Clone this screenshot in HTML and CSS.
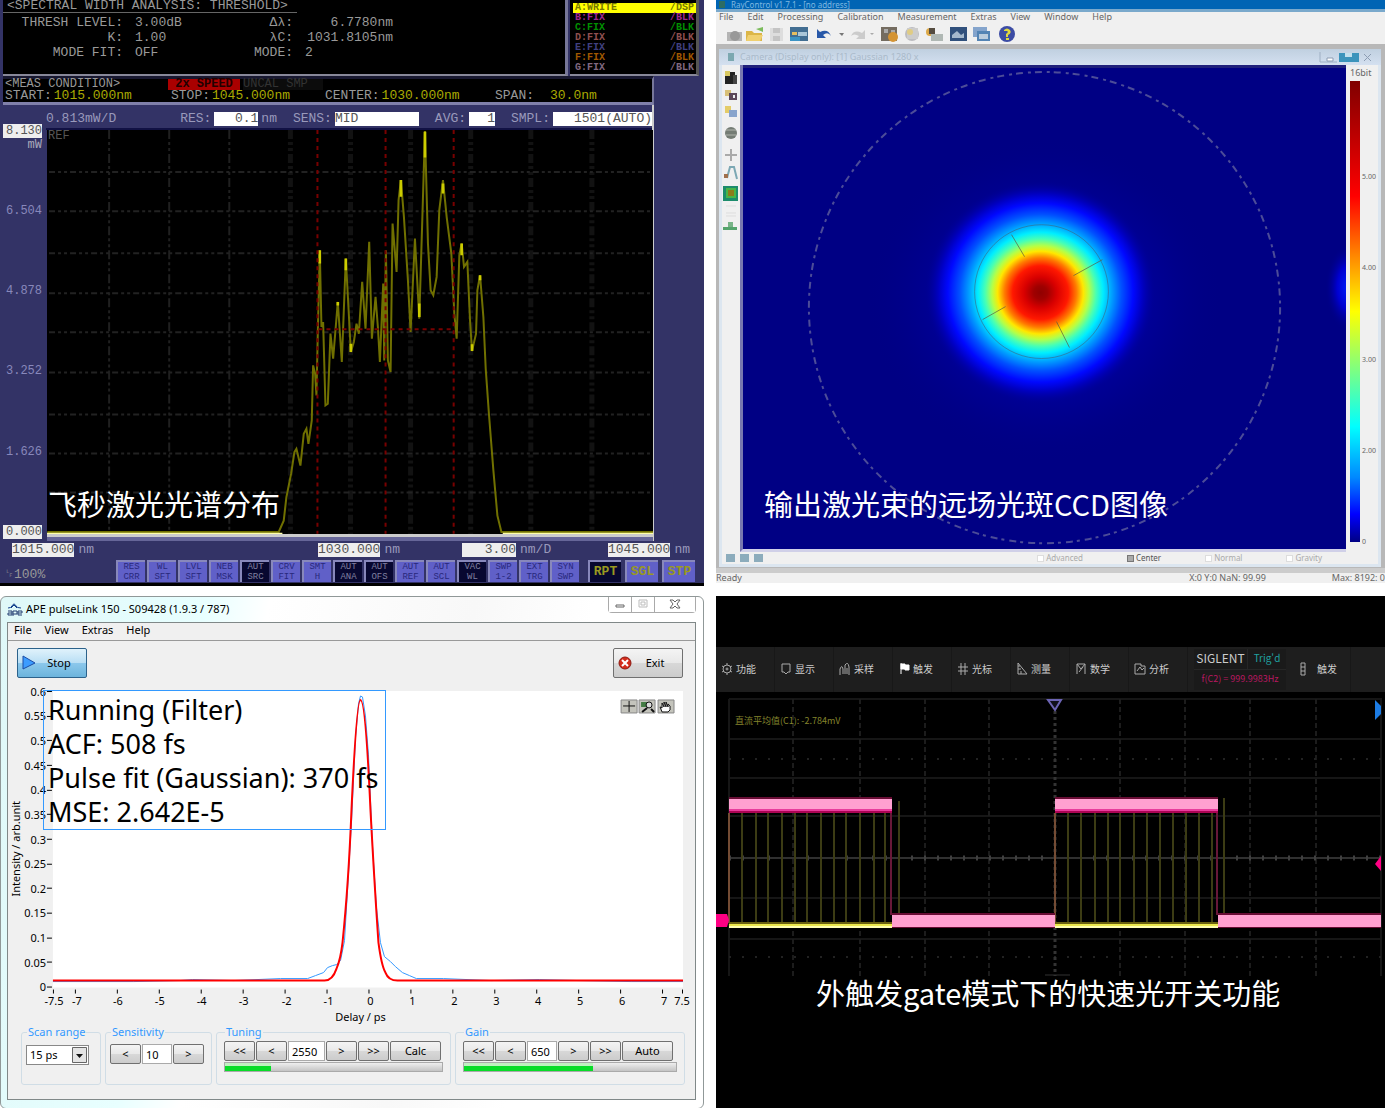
FILE: index.html
```html
<!DOCTYPE html>
<html lang="zh-CN">
<head>
<meta charset="utf-8">
<title>飞秒激光测试结果</title>
<link rel="stylesheet" href="styles.css">
</head>
<body>
<main class="board">

<section class="panel osa">
  <div class="osa-top">
    <div class="osa-analysis">
      <h2>&lt;SPECTRAL WIDTH ANALYSIS: THRESHOLD&gt;</h2>
      <dl class="osa-values">
        <dt>THRESH LEVEL:</dt><dd>3.00dB</dd><dt>Δλ:</dt><dd class="end">6.7780nm</dd>
        <dt>K:</dt><dd>1.00</dd><dt>λC:</dt><dd class="end">1031.8105nm</dd>
        <dt>MODE FIT:</dt><dd>OFF</dd><dt>MODE:</dt><dd>2</dd>
      </dl>
    </div>
    <ul class="traces">
      <li class="tr-a"><span>A:WRITE</span><span>/DSP</span></li>
      <li class="tr-b"><span>B:FIX</span><span>/BLK</span></li>
      <li class="tr-c"><span>C:FIX</span><span>/BLK</span></li>
      <li class="tr-d"><span>D:FIX</span><span>/BLK</span></li>
      <li class="tr-e"><span>E:FIX</span><span>/BLK</span></li>
      <li class="tr-f"><span>F:FIX</span><span>/BLK</span></li>
      <li class="tr-g"><span>G:FIX</span><span>/BLK</span></li>
    </ul>
  </div>
  <div class="osa-cond">
    <div class="cond-head"><span>&lt;MEAS CONDITION&gt;</span><span class="speed">2x SPEED</span><span class="dim">UNCAL SMP</span></div>
    <div class="cond-row">
      <span>START:<b>1015.000nm</b></span><span>STOP:<b>1045.000nm</b></span><span>CENTER:<b>1030.000nm</b></span><span class="span-set">SPAN:<b>30.0nm</b></span>
    </div>
  </div>
  <div class="osa-main">
    <div class="osa-axis">
      <span class="boxed">8.130<i>mW</i></span><span>6.504</span><span>4.878</span><span>3.252</span><span>1.626</span><span class="boxed">0.000</span>
    </div>
    <div class="osa-graph">
      <div class="osa-params">
        <span class="scale">0.813mW/D</span>
        <label>RES:<input class="w-res" value="0.1">nm</label>
        <label>SENS:<input class="w-sens" value="MID"></label>
        <label>AVG:<input class="w-avg" value="1"></label>
        <label>SMPL:<input class="w-smpl" value="1501(AUTO)"></label>
      </div>
      <svg class="osa-plot" viewBox="47 130 605 403" role="img" aria-label="Spectrum">
        <g class="osa-grid-v"><path d="M109 130V533M169 130V533M229 130V533"/><path class="wide" d="M290 130V533M350 130V533M410 130V533M470 130V533M530 130V533M591 130V533"/></g>
        <path class="osa-grid-h" d="M49 172H652M49 211H652M49 253H652M49 293H652M49 332H652M49 372H652M49 414H652M49 453H652M49 492H652"/>
        <text x="48" y="139" class="osa-ref">REF</text>
        <g transform="translate(270 120) scale(.33333)">
          <path class="trace" d="M-668 1234H25L40 1200L48 1130L62 1060L72 995L78 985L90 1035L100 940L108 925L114 970L124 900L128 735L134 760L138 825L142 640L148 390L153 620L158 605L165 855L172 850L180 640L188 715L202 545L214 725L226 415L236 600L241 695L250 665L258 610L265 640L275 485L285 625L296 365L304 655L315 530L322 620L328 725L338 490L341 720L346 390L352 720L360 755L366 310L378 455L384 240L391 180L400 290L412 480L420 635L433 355L446 595L455 300L463 33L472 370L480 510L488 525L498 470L506 270L517 180L528 290L542 400L551 580L558 655L566 405L573 370L580 440L590 425L598 600L604 692L616 640L620 510L628 465L638 590L645 745L655 885L668 1050L680 1185L692 1234H1146"/>
          <path class="tips" d="M463 35V112M391 180V230M573 370V405M148 390V430M226 415V450M241 670V695M604 672V692M628 465V480M517 190V220M446 550V590M202 545V556"/>
        </g>
        <path class="marker-v" d="M317 130V533M385 130V533M453 130V533M318 329H454"/>
        <path class="floor" d="M47 533H282M502 533H652"/>
      </svg>
    </div>
  </div>
  <div class="osa-scale">
    <span><b>1015.000</b>nm</span><span><b>1030.000</b>nm</span><span><b>3.00</b>nm/D</span><span><b>1045.000</b>nm</span>
  </div>
  <div class="osa-keys">
    <span class="pct">␊100%</span>
    <div class="keys">
      <button>RES<br>CRR</button><button>WL<br>SFT</button><button>LVL<br>SFT</button><button>NEB<br>MSK</button><button class="on">AUT<br>SRC</button><button>CRV<br>FIT</button><button>SMT<br>H</button><button class="on">AUT<br>ANA</button><button class="on">AUT<br>OFS</button><button>AUT<br>REF</button><button>AUT<br>SCL</button><button class="on">VAC<br>WL</button><button>SWP<br>1-2</button><button>EXT<br>TRG</button><button>SYN<br>SWP</button>
    </div>
    <div class="runs"><button class="on">RPT</button><button>SGL</button><button>STP</button></div>
  </div>
  <p class="caption">飞秒激光光谱分布</p>
</section>

<section class="panel beam">
  <div class="beam-title"><i></i>RayControl v1.7.1 - [no address]</div>
  <div class="beam-head">
    <nav class="beam-menu"><a href="#">File</a><a href="#">Edit</a><a href="#">Processing</a><a href="#">Calibration</a><a href="#">Measurement</a><a href="#">Extras</a><a href="#">View</a><a href="#">Window</a><a href="#">Help</a></nav>
    <svg class="beam-tools" viewBox="722 25 300 19" aria-hidden="true">
      <path d="M727 32h15v9h-15z" fill="#b4b4b4"/><circle cx="735" cy="36" r="5" fill="#999"/>
      <path d="M746 31h6l2 2h8v8h-16z" fill="#dcb648"/><path d="M748 35h15l-3 6h-14z" fill="#f0d070"/><path d="M756 29l7-2v5z" fill="#7cbc5c"/>
      <path d="M770 28h13v13h-13z" fill="#ddd"/><path d="M773 28h7v5h-7zM773 36h7v5h-7z" fill="#c4c4c4"/>
      <path d="M790 27h18v14h-18z" fill="#426e92"/><path d="M792 32h5v3h-5z" fill="#e6be60"/><path d="M798 32h9v4h-9z" fill="#aac6d8"/><path d="M790 37h10v4h-10z" fill="#3c94c4"/>
      <path d="M817 29v9h9l-3-3q5-4 8 1q-3-8-11-4z" fill="#2858a8"/><path d="M839 33h5l-2 3z" fill="#777"/>
      <path d="M865 30v9h-9l3-3q-5-3-8 0q3-7 11-3z" fill="#ccc"/><path d="M870 33h4l-2 2z" fill="#aaa"/>
      <path d="M881 27h16v14h-16z" fill="#746c60"/><path d="M884 29h4v4h-4zM891 30h4v3h-4z" fill="#aaa"/><circle cx="893" cy="37" r="5" fill="#d49434"/>
      <circle cx="912" cy="34" r="7" fill="#bcbcc0"/><path d="M907 28h11v11h-11z" fill="#ccc"/><circle cx="910" cy="32" r="3" fill="#e0cc84"/>
      <circle cx="930" cy="32" r="4" fill="#dca848"/><path d="M929 28h6v6h-6z" fill="#554c40"/><path d="M931 34h12v7h-12z" fill="#b0b8b4"/>
      <path d="M950 27h17v14h-17z" fill="#30507c"/><path d="M952 35l5-4 4 4 3-2v5h-12z" fill="#a4b8cc"/>
      <path d="M973 27h14v10h-14z" fill="#84a4cc"/><path d="M977 31h13v10h-13z" fill="#5484b4"/><path d="M979 34h9v5h-9z" fill="#bccddd"/>
      <circle cx="1007" cy="34" r="8" fill="#3c4ca4"/><path d="M1004 30q3-3 6 0q2 3-2 5v2h-2v-3q3-2 1-3h-3z" fill="#e0d840"/><path d="M1006 38h3v2h-3z" fill="#e0d840"/>
    </svg>
  </div>
  <div class="beam-client">
    <div class="child-title"><i></i><span>Camera (Display only): [1] Gaussian 1280 x</span>
      <svg viewBox="1318 51 60 13" aria-hidden="true"><path d="M1320 52v10h17" fill="none" stroke="#9fb0c4"/><path d="M1327 58h6v3h-6z" fill="#fff" stroke="#8d9db3"/><path d="M1339 53h20v9h-20z" fill="#3c94bc"/><path d="M1345 53h7v4h-7z" fill="#c2e0ee"/><path d="M1364 54l7 7m0-7l-7 7" stroke="#8d9db3"/></svg>
    </div>
    <div class="child-body">
      <svg class="side-tools" viewBox="722 65 18 172" aria-hidden="true">
        <path d="M727 72h8v12h-10v-8z" fill="#222"/><path d="M725 71h5v5h-5z" fill="#d8c860"/><path d="M733 75h4v9h-4z" fill="#444"/>
        <path d="M725 90h6v6h-6z" fill="#d8c078"/><path d="M729 93h8v7h-8z" fill="#5c4858"/><path d="M733 95h2v3h-2z" fill="#eee"/>
        <path d="M725 106h6v7h-6z" fill="#e4cc68"/><path d="M729 110h8v7h-8z" fill="#88a4cc"/>
        <circle cx="731" cy="133" r="6" fill="#747c74"/><path d="M726 130h10M726 135h10" stroke="#b0b4ac"/>
        <path d="M731 149v12M725 155h12" stroke="#aaa" stroke-width="2"/>
        <path d="M727 178l3-11h4l3 12" fill="none" stroke="#7ca8b4" stroke-width="2"/><path d="M724 174h4v4h-4z" fill="#a0704c"/>
        <path d="M723 186h15v15h-15z" fill="#1c8c6c"/><path d="M726 188h10v10h-10z" fill="#48b448"/><path d="M728 190h6v6h-6z" fill="#8c7c1c"/>
        <path d="M726 206h10M726 213h10M726 216h10" stroke="#ddd"/>
        <path d="M723 227h14v3h-14z" fill="#54a46c"/><path d="M728 222h5v5h-5z" fill="#78b488"/>
      </svg>
      <svg class="heat" viewBox="743 65 604 485" role="img" aria-label="Beam profile">
        <defs>
          <radialGradient id="spot"><stop offset="0" stop-color="#900000"/><stop offset=".06" stop-color="#a00000"/><stop offset=".14" stop-color="#d80000"/><stop offset=".24" stop-color="#ff1800"/><stop offset=".31" stop-color="#ff7a00"/><stop offset=".37" stop-color="#ffe800"/><stop offset=".42" stop-color="#b4ff48"/><stop offset=".48" stop-color="#48ffb4"/><stop offset=".54" stop-color="#00eeff"/><stop offset=".62" stop-color="#009cff"/><stop offset=".7" stop-color="#0050ff"/><stop offset=".8" stop-color="#0008ff"/><stop offset=".88" stop-color="#0000c4"/><stop offset="1" stop-color="#000090" stop-opacity="0"/></radialGradient>
          <radialGradient id="halo"><stop offset="0" stop-color="#0000b4"/><stop offset=".5" stop-color="#0000a0"/><stop offset="1" stop-color="#000084" stop-opacity="0"/></radialGradient>
          <radialGradient id="edge"><stop offset="0" stop-color="#0020ff"/><stop offset=".5" stop-color="#0000d0"/><stop offset="1" stop-color="#000084" stop-opacity="0"/></radialGradient>
        </defs>
        <path d="M743 65h604v485h-604z" fill="#000084"/>
        <path d="M743 65h604v3h-604z" fill="#20207c"/>
        <ellipse cx="1045" cy="300" rx="180" ry="165" fill="url(#halo)"/>
        <ellipse cx="1350" cy="288" rx="24" ry="44" fill="url(#edge)"/>
        <ellipse cx="1041" cy="293" rx="116" ry="112" fill="url(#spot)"/>
        <circle class="ring" cx="1045" cy="308" r="236"/>
        <circle class="ring-in" cx="1042" cy="292" r="67"/>
        <path class="cross" d="M1012 235L1025 257M1070 348L1057 322M1103 260L1074 276M983 320L1006 307"/>
      </svg>
      <div class="colorbar">
        <span class="cb-unit">16bit</span>
        <div class="cb-row"><div class="cb-bar"></div><div class="cb-labels"><span></span><span>5.00</span><span>4.00</span><span>3.00</span><span>2.00</span><span>0</span></div></div>
      </div>
    </div>
    <div class="child-status">
      <span class="chips"><i></i><i></i><i></i></span>
      <div class="checks"><label><input type="checkbox">Advanced</label><label class="picked"><input type="checkbox" checked>Center</label><label><input type="checkbox">Normal</label><label><input type="checkbox">Gravity</label></div>
    </div>
  </div>
  <div class="beam-status"><span>Ready</span><span class="pos">X:0 Y:0 NaN: 99.99</span><span>Max: 8192: 0</span></div>
  <p class="caption">输出激光束的远场光斑CCD图像</p>
</section>

<section class="panel ape">
  <header class="ape-title">
    <svg width="16" height="13" viewBox="0 0 16 13" aria-hidden="true"><path d="M1 5q3 0 4-2q2-4 4 0q1 2 5 2M4 5l3-3 3 3" fill="none" stroke="#14408c"/><path d="M1 8h4v4h-4v-2h4M6 13v-5h4v3h-4M15 12h-4v-4h4v2h-4" fill="none" stroke="#223c70"/></svg>
    <h2>APE pulseLink 150 - S09428 (1.9.3 / 787)</h2>
    <div class="win-buttons"><button aria-label="Minimize"><svg viewBox="0 0 12 10"><path d="M2 6h8v2H2z"/></svg></button><button aria-label="Maximize" disabled><svg viewBox="0 0 12 10"><path d="M2 1h8v7H2zM4 3h4v3H4z"/></svg></button><button class="close" aria-label="Close"><svg viewBox="0 0 12 10"><path d="M1 1h3l2 2 2-2h3L8 5l3 4H8L6 7 4 9H1l3-4z"/></svg></button></div>
  </header>
  <div class="ape-body">
    <nav class="ape-menu"><a href="#">File</a><a href="#">View</a><a href="#">Extras</a><a href="#">Help</a></nav>
    <div class="ape-actions">
      <button class="stop"><svg width="14" height="16" viewBox="0 0 14 16"><path d="M1 1l12 7-12 6z" fill="#3c9cff" stroke="#1c4ca4"/></svg><span>Stop</span></button>
      <button class="exit"><svg width="14" height="14" viewBox="0 0 14 14"><circle cx="7" cy="7" r="6" fill="#d42c1c" stroke="#8c1c14"/><path d="M4 4l6 6m0-6l-6 6" stroke="#fff" stroke-width="2"/></svg><span>Exit</span></button>
    </div>
    <div class="ape-chart">
      <svg viewBox="8 684 688 342" role="img" aria-label="Autocorrelation">
        <path d="M53 691h631v297H53z" fill="#fff"/>
        <g class="y-labels"><text x="46" y="696">0.6</text><text x="46" y="720">0.55</text><text x="46" y="745">0.5</text><text x="46" y="770">0.45</text><text x="46" y="794">0.4</text><text x="46" y="819">0.35</text><text x="46" y="844">0.3</text><text x="46" y="868">0.25</text><text x="46" y="893">0.2</text><text x="46" y="917">0.15</text><text x="46" y="942">0.1</text><text x="46" y="967">0.05</text><text x="46" y="991">0</text></g>
        <path class="tick" d="M47 691.500h5M47 716.500h5M47 740.500h5M47 765.500h5M47 790.500h5M47 814.500h5M47 839.500h5M47 864.500h5M47 888.500h5M47 913.500h5M47 938.500h5M47 962.500h5M47 987.500h5M53.500 990v4M75.500 990v4M117.500 990v4M159.500 990v4M201.500 990v4M243.500 990v4M285.500 990v4M327.500 990v4M369.500 990v4M411.500 990v4M453.500 990v4M495.500 990v4M537.500 990v4M579.500 990v4M621.500 990v4M663.500 990v4M683.500 990v4"/>
        <g class="x-labels"><text x="54" y="1005">-7.5</text><text x="77" y="1005">-7</text><text x="118" y="1005">-6</text><text x="160" y="1005">-5</text><text x="202" y="1005">-4</text><text x="244" y="1005">-3</text><text x="287" y="1005">-2</text><text x="329" y="1005">-1</text><text x="371" y="1005">0</text><text x="413" y="1005">1</text><text x="455" y="1005">2</text><text x="497" y="1005">3</text><text x="539" y="1005">4</text><text x="581" y="1005">5</text><text x="623" y="1005">6</text><text x="665" y="1005">7</text><text x="683" y="1005">7.5</text><text x="361" y="1021">Delay / ps</text><text transform="translate(20 849) rotate(-90)">Intensity / arb.unit</text></g>
        <path class="acf" d="M53 982H134L180 981L193 980L234 981L281 979H308L316 976L324 973L328 968L333 966L337 965L341 961L345 941L349 874L352 822L356 738L359 704L361 696L363 697L366 716L369 755L373 846L377 908L381 943L385 957L391 962L396 967L403 973L410 976L417 979H444L492 981L540 980L580 981L632 982H684"/>
        <path class="fit" d="M53 981H325Q333 981 337 969Q341 960 343 943Q349 885 352 810Q357 700 361 700Q366 700 371 810Q375 885 379 943Q382 966 386 973Q389 981 398 981H684"/>
        <g transform="translate(622 700)">
          <path d="M0 0h16v13H0zM18 0h16v13H18zM37 0h16v13H37z" fill="#c4c4bc" stroke="#888"/>
          <path d="M8 1v11M2 6h12" stroke="#111"/><path d="M20 2h6v5h-6z" fill="#447c44"/><circle cx="28" cy="5" r="3" fill="#ddd" stroke="#111"/><path d="M26 8l-5 4M30 9l3 3" stroke="#111" stroke-width="2"/>
          <path d="M41 12l-2-5 2 1V3l2 4V2l2 5V2l2 5V4l2 2v4l-2 2z" fill="#fff" stroke="#111"/>
        </g>
      </svg>
      <div class="readout">Running (Filter)<br>ACF: 508 fs<br>Pulse fit (Gaussian): 370 fs<br>MSE: 2.642E-5</div>
    </div>
    <div class="ape-groups">
      <fieldset class="g-low"><legend>Scan range</legend><div class="picker"><select aria-label="Scan range"><option>15 ps</option></select><svg viewBox="0 0 15 16" aria-hidden="true"><path d="M0.500 0.500h14v15h-14z" fill="#e4e4e4" stroke="#666"/><path d="M4 7h7l-3.500 4z" fill="#111"/></svg></div></fieldset>
      <fieldset class="g-low"><legend>Sensitivity</legend><div class="steps"><button>&lt;</button><input value="10" aria-label="Sensitivity"><button>&gt;</button></div></fieldset>
      <fieldset><legend>Tuning</legend><div class="steps"><button>&lt;&lt;</button><button>&lt;</button><input class="wide" value="2550" aria-label="Tuning"><button>&gt;</button><button>&gt;&gt;</button><button class="big">Calc</button></div><progress value="21" max="100" aria-label="Tuning level"></progress></fieldset>
      <fieldset><legend>Gain</legend><div class="steps"><button>&lt;&lt;</button><button>&lt;</button><input value="650" aria-label="Gain"><button>&gt;</button><button>&gt;&gt;</button><button class="big">Auto</button></div><progress value="61" max="100" aria-label="Gain level"></progress></fieldset>
    </div>
  </div>
</section>

<section class="panel scope">
  <div class="scope-bar">
    <nav>
      <button><svg viewBox="0 0 12 14"><circle cx="6" cy="7" r="4"/><circle cx="6" cy="7" r="1"/><path d="M6 1v2M6 11v2M1 4l2 1M9 9l2 1M1 10l2-1M9 5l2-1"/></svg>功能</button>
      <button><svg viewBox="0 0 12 14"><path d="M2 2h8v8H8l-2 2-2-2H2z"/></svg>显示</button>
      <button><svg viewBox="0 0 12 14"><path d="M1 13V7q2-5 3 0v5M6 12V3q3-4 4 2v8M8 12V6"/></svg>采样</button>
      <button><svg viewBox="0 0 12 14"><path d="M3 1v11M3 2h4v1h4v5H7V7H3z" fill="#fff" stroke="#fff"/></svg>触发</button>
      <button><svg viewBox="0 0 12 14"><path d="M4 1v12M8 1v12M1 5h10M1 9h10"/></svg>光标</button>
      <button><svg viewBox="0 0 12 14"><path d="M2 1v11h9zM2 4h2M2 7h3M5 9v3"/></svg>测量</button>
      <button><svg viewBox="0 0 12 14"><path d="M2 12V2l4 5 4-5v10M2 2h8M4 10l4-5"/></svg>数学</button>
      <button><svg viewBox="0 0 12 14"><path d="M4 2H1v10h10V4H7V2zM3 9l3-4 2 3 2-2"/></svg>分析</button>
    </nav>
    <div class="brand"><strong>SIGLENT</strong><em>Trig'd</em><span>f(C2) = 999.9983Hz</span></div>
    <button class="last"><svg viewBox="0 0 12 14"><path d="M4 1h4v12H4zM4 5h4M4 9h4"/></svg>触发</button>
  </div>
  <svg class="scope-plot" viewBox="716 692 669 416" role="img" aria-label="Oscilloscope trace">
    <path class="sg" d="M729 698H1381V975M729 698V975M729 738H1381M729 777H1381M729 815H1381M729 897H1381M729 938H1381"/>
    <path class="sg-v" d="M793 698V975M860 698V975M925 698V975M989 698V975M1120 698V975M1185 698V975M1250 698V975M1316 698V975"/>
    <path class="sg-dots" d="M729 758H1381M729 956H1381"/>
    <path class="sg-mid" d="M729 857H1381"/><path class="sg-ticks" d="M729 857H1381"/>
    <path class="sg-center" d="M1055 710V975"/>
    <path d="M1045 974h25" stroke="#333"/>
    <text x="735" y="723" class="mean">直流平均值(C1): -2.784mV</text>
    <path class="burst" d="M742 812V927M756 812V927M768 812V927M782 812V927M795 812V927M807 812V927M821 812V927M834 812V927M846 812V927M860 812V927M874 812V927M885 812V927M899 800V913M1068 812V927M1081 812V927M1095 812V927M1108 812V927M1120 812V927M1134 812V927M1147 812V927M1160 812V927M1173 812V927M1186 812V927M1199 812V927M1212 812V927M1224 797V913"/>
    <path d="M729 812V922M1055 812V922" stroke="#744c34" stroke-width="2"/><path d="M891 812V914M1217 812V914" stroke="#681838" stroke-width="2"/>
    <g id="gate"><path d="M729 796h163v16H729zM892 912h163v15H892z" fill="#680c34"/><path d="M729 798h163v10H729zM892 914h163v12H892z" fill="#ffa0d0"/><path d="M729 808h163v2H729z" fill="#e83c9c"/><path d="M729 810h163v2H729z" fill="#ac0454"/><path d="M729 921h163v2H729z" fill="#686010"/><path d="M729 923h163v2H729z" fill="#ece84c"/><path d="M729 925h163v2H729z" fill="#ffffb0"/></g>
    <use href="#gate" x="326"/>
    <path d="M716 913h11l2 6-2 7h-11z" fill="#ff0084"/>
    <path d="M1048 699h13l-6 10z" fill="#10101c" stroke="#6c64b4" stroke-width="2"/>
    <path d="M1375 699l6 6v8l-6 6z" fill="#1c7ce4"/><path d="M1381 855v15l-6-7z" fill="#ff0084"/>
  </svg>
  <p class="caption">外触发gate模式下的快速光开关功能</p>
</section>

</main>
</body>
</html>
```
FILE: styles.css
```css
* { box-sizing: border-box; }
body { margin: 0; background: #fff; font-family: "Noto Sans", "Noto Sans CJK SC", sans-serif; }
h2, p, dl, dd, ul { margin: 0; padding: 0; }
button, input, select { font: inherit; color: inherit; margin: 0; padding: 0; border-radius: 0; }
a { color: inherit; text-decoration: none; }
svg { display: block; }

.board { display: grid; grid-template-columns: 704fr 669fr; column-gap: 12px; row-gap: 10px; align-items: start; }
.panel { position: relative; min-width: 0; overflow: hidden; }
.caption { position: absolute; color: #fff; font: 29px/40px "Noto Sans CJK SC", sans-serif; white-space: nowrap; }

/* Optical spectrum analyser */
.osa { background: #333366; border-bottom: 3px solid #000; font: 13px/14px "Liberation Mono", monospace; color: #999; }
.osa .caption { left: 48px; bottom: 60px; }
.osa-top { display: flex; height: 76px; gap: 2px; padding: 0 5px 0 3px; }
.osa-analysis { flex: 1; background: #000; border-right: 3px solid #777799; border-bottom: 2px solid #888899; white-space: nowrap; }
.osa-analysis h2 { font: inherit; line-height: 12px; width: 294px; padding-left: 4px; border-bottom: 1px solid #666; }
.osa-values { display: grid; grid-template-columns: 120px 68px 78px 88px; column-gap: 12px; padding-top: 2px; line-height: 15px; }
.osa-values dt { text-align: right; }
.osa-values .end { text-align: right; }
.traces { width: 129px; list-style: none; background: #000; padding-top: 3px; border-right: 3px solid #555; border-bottom: 2px solid #888899; font-size: 10px; font-weight: bold; line-height: 10px; }
.traces li { display: flex; justify-content: space-between; padding: 0 2px 0 2px; margin-left: 3px; }
.tr-a { background: #ffff00; color: #777700; }
.tr-b { color: #a02890; }
.tr-c { color: #009000; }
.tr-d { color: #905050; }
.tr-e { color: #404080; }
.tr-f { color: #a05800; }
.tr-g { color: #806880; }
.osa-cond { background: #000; border-top: 3px solid #181830; border-right: 2px solid #777799; border-bottom: 3px solid #8080aa; margin: 0 50px 0 3px; padding-left: 2px; height: 29px; line-height: 12px; white-space: nowrap; }
.cond-head { display: flex; font-size: 12px; line-height: 11px; }
.cond-head span:first-child { width: 163px; }
.speed { width: 72px; background: #aa0000; color: #220000; font-weight: bold; text-align: center; }
.dim { width: 80px; color: #333; background: #0c0c0c; margin-left: 3px; }
.cond-row { display: grid; grid-template-columns: 166px 154px 170px 1fr; line-height: 12px; }
.cond-row b { color: #aaaa00; font-weight: normal; margin-left: 2px; }
.cond-row .span-set b { margin-left: 16px; }
.osa-main { display: flex; padding-right: 50px; }
.osa-axis { width: 46px; padding: 19px 4px 2px 3px; display: flex; flex-direction: column; justify-content: space-between; text-align: right; color: #8888bb; font-size: 12px; }
.osa-axis .boxed { position: relative; background: #eee; color: #555; }
.osa-axis i { position: absolute; right: 0; top: 14px; color: #aaaabb; font-style: normal; }
.osa-graph { flex: 1; min-width: 0; border-right: 2px solid #ccc; }
.osa-params { height: 25px; display: flex; align-items: center; justify-content: space-between; padding-top: 5px; border-bottom: 2px solid #111144; background: #333366; color: #9999bb; }
.osa-params .scale { margin-right: 48px; }
.osa-params label { display: flex; gap: 3px; }
.osa-params input { height: 14px; border: 0; background: #fff; color: #555; text-align: right; }
.osa-params .w-res { width: 44px; }
.osa-params .w-sens { width: 84px; text-align: left; }
.osa-params .w-avg { width: 26px; }
.osa-params .w-smpl { width: 99px; }
.osa-plot { width: 100%; background: #000; border-bottom: 3px solid #ccc; margin-left: 1px; box-shadow: 0 4px #666699; margin-bottom: 4px; overflow: hidden; }
.osa-grid-v path { stroke: #202020; stroke-width: 2; stroke-dasharray: 9 3 3 3 3 3; fill: none; }
.osa-grid-v .wide { stroke: #121212; stroke-width: 5; }
.osa-grid-h { stroke: #222; stroke-width: 2; stroke-dasharray: 6 3 3 3 3 3; }
.osa-ref { fill: #555; font-size: 12px; }
.trace { fill: none; stroke: #707000; stroke-width: 6; }
.tips { stroke: #cccc00; stroke-width: 8; }
.floor { stroke: #ffffaa; stroke-width: 2; }
.marker-v { stroke: #780000; stroke-width: 2; stroke-dasharray: 4 4; fill: none; }
.osa-scale { display: grid; grid-template-columns: 306px 144px 146px 1fr; padding: 2px 0 0 12px; color: #9999bb; }
.osa-scale b { display: inline-block; min-width: 54px; margin-right: 4px; background: #eee; color: #555; text-align: right; font-weight: normal; }
.osa-keys { display: flex; align-items: flex-end; padding: 3px 9px 1px 4px; }
.osa-keys .pct { width: 112px; }
.keys { flex: 1; display: flex; gap: 2px; }
.osa-keys button { width: 29px; height: 22px; border: 0; border-top: 2px solid #8888bb; border-left: 2px solid #8888bb; background: #6060c8; color: #28287c; font: 9px/10px "Liberation Mono", monospace; }
.osa-keys button.on { background: #080830; color: #8080a0; }
.runs { display: flex; gap: 4px; }
.osa-keys .runs button { width: 33px; color: #999920; font-size: 13px; font-weight: bold; }

/* Beam camera */
.beam { background: #b8b8b8; font: 9px/10px "Noto Sans", sans-serif; color: #666; }
.beam .caption { left: 48px; bottom: 60px; }
.beam-title { display: flex; align-items: center; gap: 6px; height: 12px; padding-left: 3px; background: #0064b4; border-bottom: 3px solid #7aa9cc; color: #7fb8e0; font-size: 8px; line-height: 9px; }
.beam-title i { width: 6px; height: 7px; background: #2c6c64; }
.beam-head { background: #f0f0f0; height: 32px; }
.beam-menu { display: flex; gap: 14px; padding-left: 3px; line-height: 9px; height: 13px; }
.beam-tools { width: 300px; margin-left: 6px; }
.beam-client { margin: 5px 4px 0 3px; background: #dce6f0; padding: 0 3px 3px; }
.child-title { display: flex; align-items: center; height: 16px; margin: 0 -3px; padding: 0 3px 0 9px; gap: 6px; background: linear-gradient(#c0d0e0, #d4e0f0); color: #aabaca; }
.child-title i { width: 6px; height: 8px; background: #7ca8b0; }
.child-title span { flex: 1; }
.child-title svg { width: 60px; }
.child-body { display: flex; background: #f0f0f0; }
.side-tools { width: 18px; flex: none; align-self: flex-start; }
.heat { flex: 1; min-width: 0; border-left: 3px solid #7878b0; border-bottom: 3px solid #d0d0e8; box-sizing: content-box; }
.ring { fill: none; stroke: #4c4c98; stroke-width: 2; stroke-dasharray: 7 5 3 4; }
.ring-in { fill: none; stroke: #3c6480; stroke-width: 1; stroke-opacity: .6; }
.cross { stroke: #5c5c40; stroke-width: 1; stroke-opacity: .7; }
.colorbar { flex: none; width: 32px; padding: 3px 0 10px 4px; display: flex; flex-direction: column; }
.cb-row { flex: 1; display: flex; gap: 2px; margin-top: 3px; }
.cb-bar { width: 10px; background: linear-gradient(#800000, #ff0000 25%, #ff8800 38%, #ffff00 50%, #66ff99 65%, #00ffff 75%, #0088ff 86%, #0000ff 94%, #000084); }
.cb-labels { display: flex; flex-direction: column; justify-content: space-between; margin-bottom: -5px; font-size: 7px; }
.cb-labels span { height: 10px; }
.child-status { display: flex; justify-content: space-between; height: 12px; background: #f0f0f0; color: #aaa; font-size: 8px; }
.chips { display: flex; gap: 5px; padding: 2px 4px; }
.chips i { width: 9px; height: 8px; background: #8cacbc; }
.checks { display: flex; gap: 44px; padding-right: 56px; }
.checks label { display: flex; align-items: center; gap: 2px; }
.checks .picked { color: #555; }
.checks input { appearance: none; width: 7px; height: 7px; border: 1px solid #ddd; background: #fff; }
.checks input:checked { border-color: #777; background: #aaa; }
.beam-status { display: flex; background: #f0f0f0; border-top: 5px solid #ccc; height: 15px; margin-top: 1px; }
.beam-status .pos { margin: 0 66px 0 auto; }

/* Autocorrelator */
.ape { border: 1px solid #909898; border-radius: 6px; padding: 0 7px 8px 6px; background: linear-gradient(100deg, #dff8f8 0, #e8ffff 26%, #fff 34%, #f8f8f8 60%, #fff 75%); font: 11px/14px "Noto Sans", sans-serif; color: #000; }
.ape-title { display: flex; gap: 3px; height: 25px; align-items: center; }
.ape-title h2 { flex: 1; font: inherit; }
.win-buttons { display: flex; align-self: flex-start; border: 1px solid #aaa; border-top: 0; border-radius: 0 0 4px 4px; }
.win-buttons button { width: 23px; height: 15px; border: 0; border-right: 1px solid #aaa; background: #fff; display: grid; place-items: center; }
.win-buttons .close { width: 40px; border: 0; }
.win-buttons svg { width: 12px; fill: #fff; stroke: #666; }
.win-buttons button:disabled svg { stroke: #bbb; }
.ape-body { border: 1px solid #808888; background: #f0f0f0; }
.ape-menu { display: flex; gap: 13px; padding: 0 6px 3px; border-bottom: 1px solid #999; }
.ape-actions { display: flex; justify-content: space-between; padding: 7px 12px 6px 9px; }
.ape-actions button { display: flex; align-items: center; width: 70px; height: 30px; padding: 0 4px; border: 1px solid #707070; border-radius: 2px; background: linear-gradient(#f4f4f4, #e8e8e8 50%, #d8d8d8 50%, #ccc); }
.ape-actions .stop { border-color: #2c628b; background: linear-gradient(#e0f2fb, #b8def4 50%, #8cc8ec 50%, #6cb4dc); }
.ape-actions span { flex: 1; }
.ape-chart { position: relative; }
.ape-chart svg { width: 100%; }
.y-labels { text-anchor: end; }
.x-labels { text-anchor: middle; }
.tick { stroke: #000; }
.acf { fill: none; stroke: #3399ff; }
.fit { fill: none; stroke: #ff0000; stroke-width: 2; }
.readout { position: absolute; left: 35px; top: 6px; width: 343px; height: 140px; padding: 2px 4px; border: 1px solid #3399ff; font-size: 27px; line-height: 34px; white-space: nowrap; }
.ape-groups { display: grid; grid-template-columns: 80px 107px 235px 230px; column-gap: 4px; padding: 0 12px 14px 13px; }
.ape fieldset { min-width: 0; height: 60px; margin: 0; padding: 2px 7px; border: 1px solid #d0dde6; border-radius: 3px; }
.ape .g-low { padding: 5px 4px; }
.ape legend { padding: 0 1px; margin-left: 1px; line-height: 14px; color: #3399ff; }
.picker { display: flex; align-items: center; width: 63px; height: 20px; margin-top: 1px; padding-right: 1px; border: 1px solid #888; background: #fff; }
.picker select { flex: 1; min-width: 0; appearance: none; border: 0; padding-left: 3px; background: none; }
.picker svg { width: 15px; }
.steps { display: flex; gap: 1px; }
.steps button { width: 31px; height: 20px; border: 1px solid #707070; border-radius: 2px; background: linear-gradient(#f4f4f4, #e8e8e8 50%, #d8d8d8 50%, #ccc); line-height: 16px; }
.steps .big { width: 51px; }
.steps input { width: 30px; height: 20px; border: 1px solid #aaa; padding-left: 3px; background: #fff; }
.steps .wide { width: 37px; }
.ape progress { display: block; width: 100%; height: 10px; margin-top: 1px; appearance: none; border: 1px solid #aaa; background: #ccc; }
.ape progress::-webkit-progress-bar { background: linear-gradient(#eee, #c4c4c4); }
.ape progress::-webkit-progress-value { background: linear-gradient(#c0f0c0 40%, #08dc28 40%); }

/* Oscilloscope */
.scope { background: #000; padding-top: 51px; font: 10px/14px "Noto Sans CJK SC", sans-serif; color: #ccc; }
.scope .caption { left: 100px; bottom: 97px; }
.scope-bar { display: flex; height: 45px; background: #1e1e1e; }
.scope nav { display: flex; }
.scope-bar button { display: flex; align-items: center; gap: 3px; width: 59px; padding: 0 0 0 5px; border: 0; border-right: 1px solid #181818; background: none; }
.scope-bar svg { width: 12px; fill: none; stroke: #aaa; }
.brand { display: grid; grid-template-columns: 1fr 38px; gap: 1px; width: 92px; margin: 2px 0 2px 6px; background: #262626; font-size: 12px; line-height: 18px; }
.brand > * { background: #1a1a1a; text-align: center; font-weight: normal; font-style: normal; }
.brand em { color: #20a0a0; font-size: 10px; }
.brand span { grid-column: 1 / 3; color: #b81860; font-size: 9px; white-space: nowrap; }
.scope-bar .last { margin-left: 6px; gap: 8px; }
.scope-plot { width: 100%; margin-top: 1px; }
.sg { fill: none; stroke: #161616; stroke-width: 2; }
.sg-v { stroke: #1c1c1c; stroke-width: 2; stroke-dasharray: 5 3; }
.sg-dots { stroke: #222; stroke-width: 2; stroke-dasharray: 2 11; }
.sg-mid { stroke: #303030; stroke-width: 2; }
.sg-ticks { stroke: #404040; stroke-width: 5; stroke-dasharray: 2 11; }
.sg-center { stroke: #333; stroke-width: 3; stroke-dasharray: 3 3; }
.mean { fill: #84842c; font-size: 9px; }
.burst { stroke: #3c3c14; stroke-width: 2; }
```
